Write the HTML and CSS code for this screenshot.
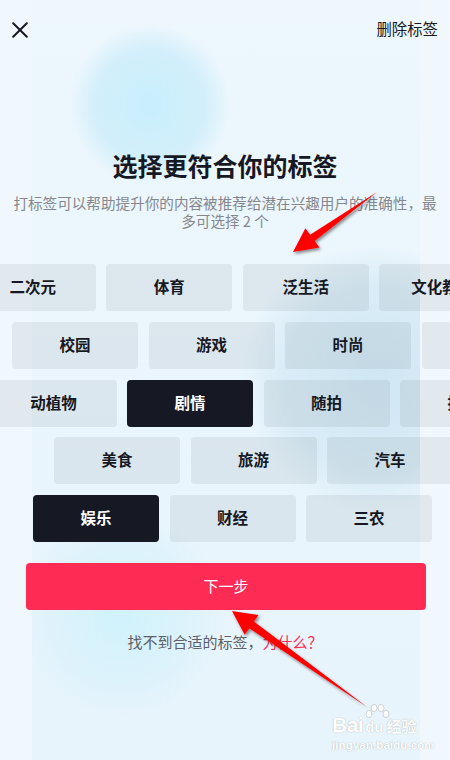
FILE: index.html
```html
<!DOCTYPE html>
<html lang="zh-CN">
<head>
<meta charset="utf-8">
<title>选择标签</title>
<link rel="stylesheet" href="styles.css">
</head>
<body>
<div class="page">
  <header class="topbar">
    <svg class="close" width="16" height="16" viewBox="0 0 16 16"><path d="M1.2 1.2 L14.8 14.8 M14.8 1.2 L1.2 14.8" stroke="#161823" stroke-width="2" fill="none" stroke-linecap="round"/></svg>
    <span class="delete">删除标签</span>
  </header>

  <h1 class="title">选择更符合你的标签</h1>
  <p class="subtitle">打标签可以帮助提升你的内容被推荐给潜在兴趣用户的准确性，最多可选择 2 个</p>

  <div class="tags">
    <div class="row row1">
      <div class="tag">二次元</div><div class="tag">体育</div><div class="tag">泛生活</div><div class="tag">文化教育</div>
    </div>
    <div class="row row2">
      <div class="tag">校园</div><div class="tag">游戏</div><div class="tag">时尚</div><div class="tag">科技</div>
    </div>
    <div class="row row3">
      <div class="tag">动植物</div><div class="tag selected">剧情</div><div class="tag">随拍</div><div class="tag">搞笑</div>
    </div>
    <div class="row row4">
      <div class="tag">美食</div><div class="tag">旅游</div><div class="tag">汽车</div>
    </div>
    <div class="row row5">
      <div class="tag selected">娱乐</div><div class="tag">财经</div><div class="tag">三农</div>
    </div>
  </div>

  <button class="next">下一步</button>
  <p class="help">找不到合适的标签，<span class="why">为什么？</span></p>

  <svg class="arrows" width="450" height="760" viewBox="0 0 450 760">
    <defs>
      <filter id="sh" x="-20%" y="-20%" width="140%" height="140%">
        <feDropShadow dx="1.5" dy="2" stdDeviation="1.5" flood-color="#000" flood-opacity="0.45"/>
      </filter>
    </defs>
    <polygon filter="url(#sh)" fill="#ff0000" points="293,252 319.4,247.6 314.7,241.1 377,192 310.1,234.7 305.4,228.2"/>
    <polygon filter="url(#sh)" fill="#ff0000" points="232,611 258.5,615.1 253.9,621.6 367,707 249.3,628.2 244.7,634.7"/>
  </svg>

  <div class="watermark">
    <svg class="paw" width="28" height="18" viewBox="0 0 28 18">
      <ellipse cx="6" cy="11" rx="3" ry="3.6" fill="#fff" stroke="#c4c8cc" stroke-width="0.8"/>
      <ellipse cx="11" cy="5" rx="3" ry="3.6" fill="#fff" stroke="#c4c8cc" stroke-width="0.8"/>
      <ellipse cx="18" cy="5" rx="3" ry="3.6" fill="#fff" stroke="#c4c8cc" stroke-width="0.8"/>
      <ellipse cx="23" cy="11" rx="3" ry="3.6" fill="#fff" stroke="#c4c8cc" stroke-width="0.8"/>
    </svg>
    <div class="wm-brand"><span class="wm-bai">Bai</span><span class="wm-du">du</span><span class="wm-jy">经验</span></div>
    <div class="wm-url">jingyan.baidu.com</div>
  </div>
</div>
</body>
</html>
```

FILE: styles.css
```css
* { box-sizing: border-box; }

html, body {
  margin: 0;
  padding: 0;
}

body {
  width: 450px;
  height: 760px;
  overflow: hidden;
  background: #f1f8fd;
  font-family: "Noto Sans CJK SC", "Noto Sans", sans-serif;
  color: #161823;
}

.page {
  position: relative;
  width: 450px;
  height: 760px;
  overflow: hidden;
  display: flex;
  flex-direction: column;
}

/* decorative inner panel with soft blobs */
.page::before {
  content: "";
  position: absolute;
  left: 32px;
  top: 0;
  width: 388px;
  height: 760px;
  z-index: 0;
  background:
    radial-gradient(circle at 118px 105px, rgba(200, 239, 252, 1) 0, rgba(206, 237, 250, 0.85) 55px, rgba(225, 243, 252, 0) 80px),
    radial-gradient(circle at 345px 380px, rgba(190, 220, 238, 0.6) 0, rgba(198, 225, 240, 0.45) 95px, rgba(210, 232, 245, 0) 135px),
    radial-gradient(circle at 90px 615px, rgba(205, 242, 252, 0.9) 0, rgba(212, 240, 251, 0.5) 70px, rgba(220, 242, 252, 0) 105px),
    linear-gradient(#edf7fd, #e7f4fc);
}

.page > * { position: relative; z-index: 1; }

.topbar {
  height: 58px;
  flex: none;
  display: flex;
  align-items: center;
  justify-content: space-between;
  padding: 0 12px 0 12px;
}

.close { display: block; margin-top: 2px; }

.delete {
  font-size: 15.4px;
  color: #161823;
  line-height: 20px;
  margin-top: -2px;
}

.title {
  margin: 89px 0 0;
  font-size: 25px;
  line-height: 36px;
  font-weight: 700;
  text-align: center;
  color: #161823;
}

.subtitle {
  margin: 11px 0 0;
  padding: 0 10px;
  font-size: 14.6px;
  line-height: 18px;
  text-align: center;
  color: #86878d;
}

.tags {
  margin-top: 34px;
  display: flex;
  flex-direction: column;
  gap: 10.75px;
  overflow: hidden;
}

.row {
  display: flex;
  gap: 10.5px;
  flex-wrap: nowrap;
}

.row1 { margin-left: -30.2px; }
.row2 { margin-left: 12px; }
.row3 { margin-left: -9.5px; }
.row4 { margin-left: 54px; }
.row5 { margin-left: 33px; }

.tag {
  flex: none;
  width: 126px;
  height: 47px;
  padding-bottom: 3px;
  border-radius: 4px;
  background: rgba(22, 24, 35, 0.065);
  display: flex;
  align-items: center;
  justify-content: center;
  font-size: 15.5px;
  font-weight: 600;
  color: #161823;
  white-space: nowrap;
}

.tag.selected {
  background: #161823;
  color: #fff;
}

.next {
  margin: 21px 24px 0 26px;
  height: 47px;
  border: none;
  border-radius: 4px;
  background: #fe2c55;
  color: #fff;
  font-family: inherit;
  font-size: 15px;
  padding: 0 0 2px;
}

.help {
  margin: 22px 0 0;
  text-align: center;
  font-size: 15px;
  line-height: 20px;
  color: #5d6068;
}

.why { color: #fe2c55; }

.arrows {
  position: absolute;
  left: 0;
  top: 0;
  z-index: 3;
  pointer-events: none;
}

.watermark {
  position: absolute;
  left: 332px;
  top: 703px;
  width: 92px;
  z-index: 4;
  color: #fff;
  font-family: "Liberation Sans", Arial, sans-serif;
  font-weight: 700;
  text-shadow: 0 0 1px rgba(0, 0, 0, 0.35);
}

.paw {
  display: block;
  margin-left: 31px;
  height: 18px;
}

.wm-brand {
  display: flex;
  align-items: baseline;
  line-height: 19px;
  margin-top: -6px;
  white-space: nowrap;
}

.wm-bai { font-size: 21px; letter-spacing: -0.5px; }
.wm-du { font-size: 15px; margin-left: 2px; }
.wm-jy {
  font-family: "Noto Sans CJK SC", sans-serif;
  font-size: 15px;
  margin-left: 3px;
}

.wm-url {
  font-size: 11.5px;
  line-height: 14px;
  letter-spacing: 0.1px;
  white-space: nowrap;
  margin-top: 2px;
}
```
